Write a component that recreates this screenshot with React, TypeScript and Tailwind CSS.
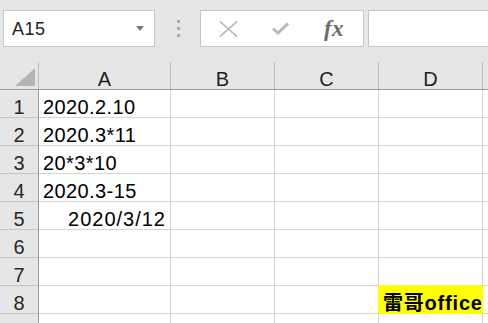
import React from 'react';

const cols = [
  { key: 'A', w: 'w-[132px]' },
  { key: 'B', w: 'w-[104px]' },
  { key: 'C', w: 'w-[104px]' },
  { key: 'D', w: 'w-[104px]' },
];

type Cell = { text?: string; right?: boolean; mark?: boolean };

const rows: Cell[][] = [
  [{ text: '2020.2.10' }],
  [{ text: '2020.3*11' }],
  [{ text: '20*3*10' }],
  [{ text: '2020.3-15' }],
  [{ text: '2020/3/12', right: true }],
  [],
  [],
  [{}, {}, {}, { text: '雷哥office', mark: true }],
  [],
];

function NameBox() {
  return (
    <div className="w-[152px] h-[37px] shrink-0 bg-white border border-[#c6c6c6] flex items-center justify-between pl-[8px] pr-[10px]">
      <span className="text-[18px] leading-none text-[#222] tracking-[0.5px]">A15</span>
      <svg width="8" height="5" viewBox="0 0 8 5">
        <path d="M0 0 H8 L4 5 Z" fill="#7a7a7a" />
      </svg>
    </div>
  );
}

function FormulaButtons() {
  return (
    <div className="w-[164px] h-[37px] shrink-0 bg-white border border-[#c6c6c6] flex items-center">
      <div className="w-[54px] flex justify-center">
        <svg width="19" height="16" viewBox="0 0 19 16">
          <path d="M1 0.5 L18 15.5 M18 0.5 L1 15.5" stroke="#b3b3b3" strokeWidth="1.6" fill="none" />
        </svg>
      </div>
      <div className="w-[50px] flex justify-center">
        <svg width="17" height="13" viewBox="0 0 17 13">
          <path d="M1 6.5 L6 11 L16 1.5" stroke="#b8b8b8" strokeWidth="3" fill="none" />
        </svg>
      </div>
      <div className="flex-1 flex justify-center">
        <span className="text-[23px] leading-none italic font-bold text-[#6b6b6b] font-['Liberation_Serif',serif] tracking-[0.5px]">fx</span>
      </div>
    </div>
  );
}

export default function App() {
  return (
    <div className="w-[488px] h-[323px] overflow-hidden bg-white font-['Liberation_Sans',Arial,sans-serif]">
      {/* formula bar */}
      <div className="h-[62px] bg-[#e6e6e6] flex items-start pt-[10px] pl-[3px]">
        <NameBox />
        <div className="w-[45px] h-[37px] shrink-0 flex flex-col items-center justify-center gap-[4px] pl-[2px]">
          <div className="w-[3px] h-[3px] bg-[#a8a8a8]" />
          <div className="w-[3px] h-[3px] bg-[#a8a8a8]" />
          <div className="w-[3px] h-[3px] bg-[#a8a8a8]" />
        </div>
        <FormulaButtons />
        <div className="ml-[4px] w-[130px] h-[37px] bg-white border border-[#c6c6c6] shrink-0" />
      </div>

      {/* column headers */}
      <div className="flex h-[28px] bg-[#e6e6e6] border-b border-[#9b9b9b]">
        <div className="w-[39px] shrink-0 border-r border-[#bdbdbd] flex items-end justify-end pr-[3px] pb-[3px]">
          <svg width="20" height="18" viewBox="0 0 20 18">
            <path d="M0 18 H20 V0 Z" fill="#b4b4b4" />
          </svg>
        </div>
        {cols.map((c) => (
          <div
            key={c.key}
            className={`${c.w} shrink-0 border-r border-[#bdbdbd] flex items-end justify-center text-[20px] leading-[20px] text-[#1f1f1f]`}
          >
            {c.key}
          </div>
        ))}
        <div className="flex-1" />
      </div>

      {/* rows */}
      {rows.map((r, i) => (
        <div key={i} className="flex h-[28px]">
          <div className="w-[39px] shrink-0 bg-[#e6e6e6] border-r border-b border-r-[#9b9b9b] border-b-[#c4c4c4] flex items-end justify-center text-[20px] leading-[20px] text-[#262626]">
            {i + 1}
          </div>
          {cols.map((c, j) => {
            const cell = r[j] || {};
            return (
              <div
                key={c.key}
                className={`${c.w} shrink-0 relative border-r border-b border-[#d4d4d4] flex items-end ${
                  cell.right ? 'justify-end pr-[4px]' : 'justify-start pl-[4px]'
                }`}
              >
                {cell.mark && (
                  <div className="absolute -top-px -left-px -right-px bottom-[-1px] bg-[#ffff00]" />
                )}
                {cell.text && (
                  <span
                    className={`relative whitespace-nowrap leading-[20px] text-black ${
                      cell.mark
                        ? "text-[20px] font-semibold tracking-[0.8px] font-['Liberation_Sans','Noto_Sans_CJK_SC',sans-serif]"
                        : cell.right
                          ? 'text-[20px] tracking-[1px]'
                          : 'text-[20px] tracking-[0.4px]'
                    }`}
                  >
                    {cell.text}
                  </span>
                )}
              </div>
            );
          })}
          <div className="flex-1 border-b border-[#d4d4d4]" />
        </div>
      ))}
    </div>
  );
}
